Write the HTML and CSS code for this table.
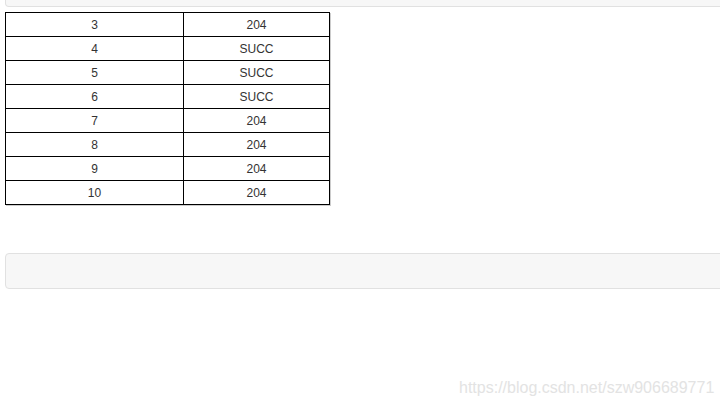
FILE: index.html
```html
<!DOCTYPE html>
<html>
<head>
<meta charset="utf-8">
<link rel="stylesheet" href="styles.css">
</head>
<body>
<div class="page">
  <div class="code-top"></div>
  <table class="data">
    <tr><td>3</td><td>204</td></tr>
    <tr><td>4</td><td>SUCC</td></tr>
    <tr><td>5</td><td>SUCC</td></tr>
    <tr><td>6</td><td>SUCC</td></tr>
    <tr><td>7</td><td>204</td></tr>
    <tr><td>8</td><td>204</td></tr>
    <tr><td>9</td><td>204</td></tr>
    <tr><td>10</td><td>204</td></tr>
  </table>
  <div class="code-bottom"></div>
</div>
<div class="watermark">https://blog.csdn.net/szw906689771</div>
</body>
</html>
```
FILE: styles.css
```css
html, body {
  margin: 0;
  padding: 0;
  background: #fff;
  width: 720px;
  height: 407px;
  overflow: hidden;
  font-family: "Liberation Sans", Arial, sans-serif;
}
.page {
  padding-left: 5px;
}
.code-top {
  width: 740px;
  height: 7px;
  box-sizing: border-box;
  background: #f7f7f7;
  border: 1px solid #e1e1e1;
  border-top: none;
  border-radius: 0 0 4px 4px;
}
.data {
  margin-top: 5px;
  border-collapse: collapse;
  font-size: 12px;
  color: #333;
  box-shadow: 1px 1px 0 #ccc;
}
.data td {
  border: 1px solid #000;
  height: 22px;
  padding: 1px 0 0;
  text-align: center;
  vertical-align: middle;
  line-height: 22px;
}
.data td:first-child {
  width: 177px;
}
.data td:last-child {
  width: 145px;
}
.code-bottom {
  margin-top: 48px;
  width: 740px;
  height: 36px;
  box-sizing: border-box;
  background: #f7f7f7;
  border: 1px solid #e1e1e1;
  border-radius: 4px;
}
.watermark {
  position: absolute;
  left: 459px;
  top: 379px;
  font-size: 16px;
  color: #e3e3e3;
}
```
